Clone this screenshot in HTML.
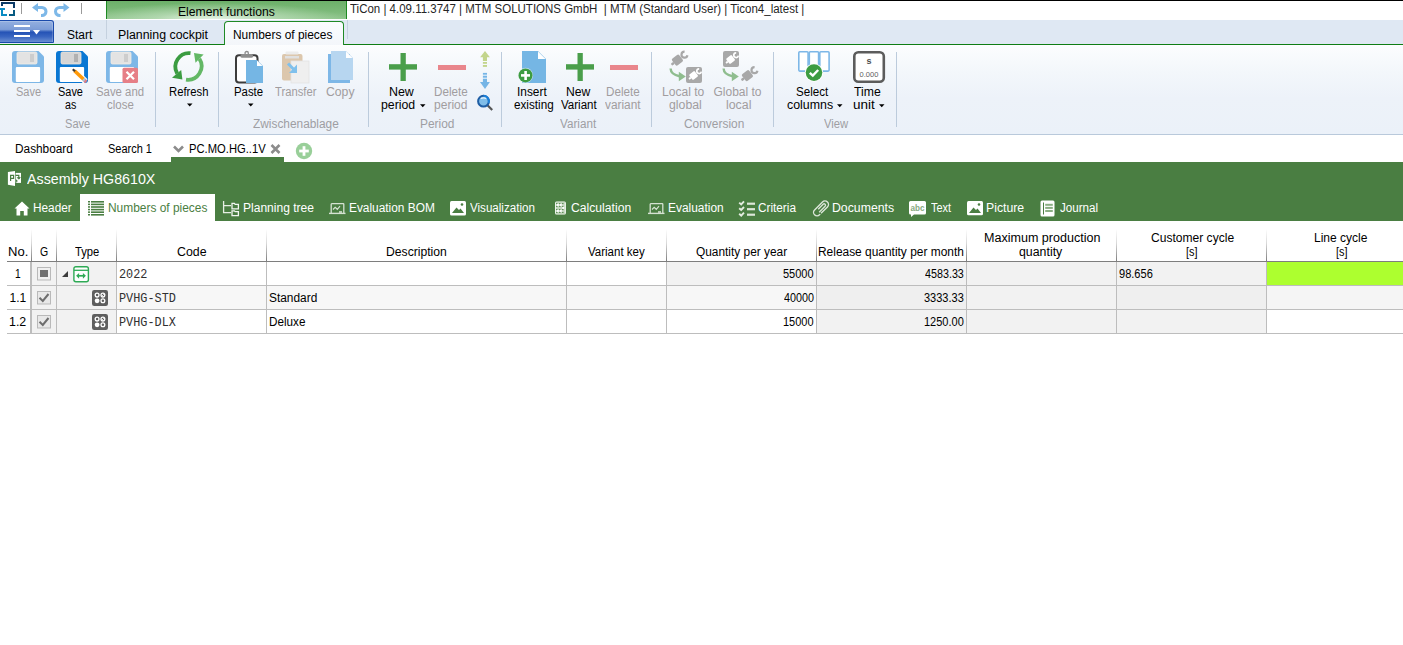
<!DOCTYPE html>
<html><head><meta charset="utf-8"><style>
html,body{margin:0;padding:0;}
body{width:1403px;height:645px;overflow:hidden;background:#fff;position:relative;font-family:'Liberation Sans',sans-serif;}
.a{position:absolute;}
.t{position:absolute;white-space:pre;line-height:20px;transform-origin:0 0;}
svg{position:absolute;overflow:visible;}

</style></head><body>
<!-- top black line -->
<div class="a" style="left:0;top:0;width:1403px;height:1px;background:#000"></div>
<!-- app icon -->
<svg style="left:0;top:0" width="16" height="18" viewBox="0 0 16 18">
<path d="M1 2H15V8H13V4H3V6H1Z" fill="#0b3a66"/>
<path d="M0 8H5V10H3V14H7V16H1V10H0Z" fill="#0a8bc3"/>
<path d="M13 10H15V16H9V14H13Z" fill="#075b82"/>
</svg>
<div class="a" style="left:21px;top:3px;width:1px;height:11px;background:#9a9a9a"></div>
<!-- undo redo -->
<svg style="left:28px;top:0" width="45" height="19" viewBox="0 0 45 19">
<path d="M4 7.5L10 3V6H14A5.5 5.5 0 0 1 14 17H13V14H14A2.5 2.5 0 0 0 14 9H10V12Z" fill="#7db8e8"/>
<path d="M41.5 7.5L35.5 3V6H31.5A5.5 5.5 0 0 0 31.5 17H32.5V14H31.5A2.5 2.5 0 0 1 31.5 9H35.5V12Z" fill="#7db8e8"/>
</svg>
<div class="a" style="left:81px;top:3px;width:1px;height:11px;background:#9a9a9a"></div>
<!-- Element functions contextual header -->
<div class="a" style="left:106px;top:1px;width:239px;height:18px;border-left:1px solid #1d8a22;border-right:1px solid #1d8a22;background:radial-gradient(ellipse 55% 90% at 45% 100%,rgba(235,246,234,0.95) 0%,rgba(200,228,198,0.6) 45%,rgba(200,228,198,0) 100%),linear-gradient(180deg,#6cb069 0%,#7dba7a 60%,#90c68d 100%)"></div>
<!-- tab strip -->
<div class="a" style="left:0;top:19px;width:1403px;height:1px;background:#fff"></div>
<div class="a" style="left:0;top:20px;width:1403px;height:24px;background:#dfe8f3"></div>
<div class="a" style="left:0;top:44px;width:1403px;height:1px;background:#0f7d14"></div>
<!-- app button -->
<div class="a" style="left:0;top:20px;width:53px;height:21px;border:1px solid #1a4aab;border-left:none;border-radius:0 3px 1px 0;box-shadow:inset -1px 1px 0 rgba(255,255,255,0.2);background:linear-gradient(180deg,#93afe0 0%,#7d9dd7 40%,#2553b6 53%,#3a66c1 75%,#6a8fd1 100%)"></div>
<div class="a" style="left:14px;top:25px;width:16px;height:2px;background:#fff"></div>
<div class="a" style="left:14px;top:30px;width:16px;height:2px;background:#fff"></div>
<div class="a" style="left:14px;top:35px;width:16px;height:2px;background:#fff"></div>
<svg style="left:33px;top:30px" width="7" height="5" viewBox="0 0 7 5"><path d="M0 0H7L3.5 4.5Z" fill="#fff"/></svg>
<div class="a" style="left:106px;top:20px;width:1px;height:19px;background:#c5d1df"></div>
<div class="a" style="left:347px;top:20px;width:1px;height:19px;background:#c5d1df"></div>
<!-- active ribbon tab -->
<div class="a" style="left:224px;top:21px;width:118px;height:24px;border:1px solid #1f8a26;border-bottom:none;border-radius:4px 4px 0 0;background:linear-gradient(180deg,#fafcfe,#f3f6fa)"></div>
<!-- ribbon -->
<div class="a" style="left:0;top:45px;width:1403px;height:89px;background:linear-gradient(180deg,#fcfdfe 0%,#f3f7fb 30%,#edf2f9 60%,#ebf1f9 100%)"></div>
<div class="a" style="left:0;top:134px;width:1403px;height:1px;background:#b9c9db"></div>
<div class="a" style="left:155px;top:52px;width:1px;height:75px;background:#bccbdc"></div>
<div class="a" style="left:218px;top:52px;width:1px;height:75px;background:#bccbdc"></div>
<div class="a" style="left:368px;top:52px;width:1px;height:75px;background:#bccbdc"></div>
<div class="a" style="left:501px;top:52px;width:1px;height:75px;background:#bccbdc"></div>
<div class="a" style="left:651px;top:52px;width:1px;height:75px;background:#bccbdc"></div>
<div class="a" style="left:773px;top:52px;width:1px;height:75px;background:#bccbdc"></div>
<div class="a" style="left:896px;top:52px;width:1px;height:75px;background:#bccbdc"></div>
<!--ICONS-->
<!-- doc tabs -->
<div class="a" style="left:171px;top:157px;width:113px;height:5px;background:#4a7e42"></div>
<!-- green band -->
<div class="a" style="left:0;top:162px;width:1403px;height:59px;background:#4a7e42"></div>
<div class="a" style="left:80px;top:194px;width:135px;height:27px;background:#fff"></div>
<!--TABLE-->
<div class="a" style="left:7px;top:262px;width:23px;height:23px;background:#ffffff"></div>
<div class="a" style="left:30px;top:262px;width:26px;height:23px;background:#f2f2f2"></div>
<div class="a" style="left:56px;top:262px;width:60px;height:23px;background:#f2f2f2"></div>
<div class="a" style="left:116px;top:262px;width:150px;height:23px;background:#ffffff"></div>
<div class="a" style="left:266px;top:262px;width:300px;height:23px;background:#ffffff"></div>
<div class="a" style="left:566px;top:262px;width:100px;height:23px;background:#ffffff"></div>
<div class="a" style="left:666px;top:262px;width:150px;height:23px;background:#f2f2f2"></div>
<div class="a" style="left:816px;top:262px;width:150px;height:23px;background:#f2f2f2"></div>
<div class="a" style="left:966px;top:262px;width:150px;height:23px;background:#f2f2f2"></div>
<div class="a" style="left:1116px;top:262px;width:150px;height:23px;background:#f2f2f2"></div>
<div class="a" style="left:1266px;top:262px;width:137px;height:23px;background:#adff2f"></div>
<div class="a" style="left:7px;top:285px;width:1396px;height:1px;background:#bdbdbd"></div>
<div class="a" style="left:7px;top:286px;width:23px;height:23px;background:#ffffff"></div>
<div class="a" style="left:30px;top:286px;width:26px;height:23px;background:#f2f2f2"></div>
<div class="a" style="left:56px;top:286px;width:60px;height:23px;background:#f2f2f2"></div>
<div class="a" style="left:116px;top:286px;width:150px;height:23px;background:#f7f7f7"></div>
<div class="a" style="left:266px;top:286px;width:300px;height:23px;background:#f7f7f7"></div>
<div class="a" style="left:566px;top:286px;width:100px;height:23px;background:#f7f7f7"></div>
<div class="a" style="left:666px;top:286px;width:150px;height:23px;background:#f7f7f7"></div>
<div class="a" style="left:816px;top:286px;width:150px;height:23px;background:#efefef"></div>
<div class="a" style="left:966px;top:286px;width:150px;height:23px;background:#f2f2f2"></div>
<div class="a" style="left:1116px;top:286px;width:150px;height:23px;background:#efefef"></div>
<div class="a" style="left:1266px;top:286px;width:137px;height:23px;background:#f5f5f5"></div>
<div class="a" style="left:7px;top:309px;width:1396px;height:1px;background:#bdbdbd"></div>
<div class="a" style="left:7px;top:310px;width:23px;height:23px;background:#ffffff"></div>
<div class="a" style="left:30px;top:310px;width:26px;height:23px;background:#f2f2f2"></div>
<div class="a" style="left:56px;top:310px;width:60px;height:23px;background:#f2f2f2"></div>
<div class="a" style="left:116px;top:310px;width:150px;height:23px;background:#ffffff"></div>
<div class="a" style="left:266px;top:310px;width:300px;height:23px;background:#ffffff"></div>
<div class="a" style="left:566px;top:310px;width:100px;height:23px;background:#ffffff"></div>
<div class="a" style="left:666px;top:310px;width:150px;height:23px;background:#ffffff"></div>
<div class="a" style="left:816px;top:310px;width:150px;height:23px;background:#f2f2f2"></div>
<div class="a" style="left:966px;top:310px;width:150px;height:23px;background:#f2f2f2"></div>
<div class="a" style="left:1116px;top:310px;width:150px;height:23px;background:#f2f2f2"></div>
<div class="a" style="left:1266px;top:310px;width:137px;height:23px;background:#ffffff"></div>
<div class="a" style="left:7px;top:333px;width:1396px;height:1px;background:#bdbdbd"></div>
<div class="a" style="left:30px;top:262px;width:2px;height:72px;background:#bdbdbd"></div>
<div class="a" style="left:56px;top:262px;width:1px;height:72px;background:#bdbdbd"></div>
<div class="a" style="left:116px;top:262px;width:1px;height:72px;background:#bdbdbd"></div>
<div class="a" style="left:266px;top:262px;width:1px;height:72px;background:#bdbdbd"></div>
<div class="a" style="left:566px;top:262px;width:1px;height:72px;background:#bdbdbd"></div>
<div class="a" style="left:666px;top:262px;width:1px;height:72px;background:#bdbdbd"></div>
<div class="a" style="left:816px;top:262px;width:1px;height:72px;background:#bdbdbd"></div>
<div class="a" style="left:966px;top:262px;width:1px;height:72px;background:#bdbdbd"></div>
<div class="a" style="left:1116px;top:262px;width:1px;height:72px;background:#bdbdbd"></div>
<div class="a" style="left:1266px;top:262px;width:1px;height:72px;background:#bdbdbd"></div>
<div class="a" style="left:31px;top:229px;width:1px;height:32px;background:linear-gradient(180deg,rgba(128,128,128,0) 0%,rgba(128,128,128,0.3) 45%,#7e7e7e 100%)"></div>
<div class="a" style="left:56px;top:229px;width:1px;height:32px;background:linear-gradient(180deg,rgba(128,128,128,0) 0%,rgba(128,128,128,0.3) 45%,#7e7e7e 100%)"></div>
<div class="a" style="left:116px;top:229px;width:1px;height:32px;background:linear-gradient(180deg,rgba(128,128,128,0) 0%,rgba(128,128,128,0.3) 45%,#7e7e7e 100%)"></div>
<div class="a" style="left:266px;top:229px;width:1px;height:32px;background:linear-gradient(180deg,rgba(128,128,128,0) 0%,rgba(128,128,128,0.3) 45%,#7e7e7e 100%)"></div>
<div class="a" style="left:566px;top:229px;width:1px;height:32px;background:linear-gradient(180deg,rgba(128,128,128,0) 0%,rgba(128,128,128,0.3) 45%,#7e7e7e 100%)"></div>
<div class="a" style="left:666px;top:229px;width:1px;height:32px;background:linear-gradient(180deg,rgba(128,128,128,0) 0%,rgba(128,128,128,0.3) 45%,#7e7e7e 100%)"></div>
<div class="a" style="left:816px;top:229px;width:1px;height:32px;background:linear-gradient(180deg,rgba(128,128,128,0) 0%,rgba(128,128,128,0.3) 45%,#7e7e7e 100%)"></div>
<div class="a" style="left:966px;top:229px;width:1px;height:32px;background:linear-gradient(180deg,rgba(128,128,128,0) 0%,rgba(128,128,128,0.3) 45%,#7e7e7e 100%)"></div>
<div class="a" style="left:1116px;top:229px;width:1px;height:32px;background:linear-gradient(180deg,rgba(128,128,128,0) 0%,rgba(128,128,128,0.3) 45%,#7e7e7e 100%)"></div>
<div class="a" style="left:1266px;top:229px;width:1px;height:32px;background:linear-gradient(180deg,rgba(128,128,128,0) 0%,rgba(128,128,128,0.3) 45%,#7e7e7e 100%)"></div>
<div class="a" style="left:7px;top:261px;width:1396px;height:1px;background:#7e7e7e"></div>
<!--/TABLE-->

<!-- Save (disabled) -->
<svg style="left:12px;top:51px" width="32" height="32" viewBox="0 0 32 32">
<path d="M3 0H26.5L32 5.5V29Q32 32 29 32H3Q0 32 0 29V3Q0 0 3 0Z" fill="#7db7e7"/>
<rect x="5" y="1" width="20" height="12" rx="1.5" fill="#e3e3e3" stroke="#f3ede6" stroke-width="0.8"/>
<rect x="18" y="3" width="4" height="8" fill="#cdcdcd"/>
<rect x="3.8" y="16" width="24.3" height="15" rx="1" fill="#fff"/>
</svg>
<!-- Save as -->
<svg style="left:56px;top:51px" width="32" height="32" viewBox="0 0 32 32">
<path d="M3 0H26.5L32 5.5V29Q32 32 29 32H3Q0 32 0 29V3Q0 0 3 0Z" fill="#0a77d3"/>
<rect x="5" y="1" width="20" height="12" rx="1.5" fill="#d5d5d5" stroke="#efe6dc" stroke-width="0.8"/>
<rect x="18" y="3" width="4" height="8" fill="#b1b1b1"/>
<rect x="3.8" y="16" width="24.3" height="15" rx="1" fill="#fff"/>
<path d="M17 18.5L29.5 30.5" stroke="#fff" stroke-width="6"/>
<path d="M18.5 19.8L27.5 28.3" stroke="#ff9a0a" stroke-width="3.6"/>
<path d="M16.8 18.2L19 20.3" stroke="#3a3a3a" stroke-width="2.2"/>
<path d="M27.3 28.1L29.2 29.9" stroke="#b0c4d4" stroke-width="3.6"/>
<path d="M28.7 29.5L30.2 31" stroke="#e07d86" stroke-width="3.2"/>
</svg>
<!-- Save and close (disabled) -->
<svg style="left:106px;top:51px" width="32" height="32" viewBox="0 0 32 32">
<path d="M3 0H26.5L32 5.5V29Q32 32 29 32H3Q0 32 0 29V3Q0 0 3 0Z" fill="#7db7e7"/>
<rect x="5" y="1" width="20" height="12" rx="1.5" fill="#e3e3e3" stroke="#f3ede6" stroke-width="0.8"/>
<rect x="18" y="3" width="4" height="8" fill="#cdcdcd"/>
<rect x="3.8" y="16" width="24.3" height="15" rx="1" fill="#fff"/>
<rect x="16.5" y="16.8" width="15.5" height="15.2" rx="1.5" fill="#e67f87"/>
<path d="M20.5 20.7L28 28.2M28 20.7L20.5 28.2" stroke="#fff" stroke-width="2.2"/>
</svg>
<!-- Refresh -->
<svg style="left:171px;top:51px" width="34" height="32" viewBox="0 0 34 32">
<path d="M19.5 2.2A13.6 13.6 0 0 0 6.2 22.5" fill="none" stroke="#3b9c41" stroke-width="3.8"/>
<path d="M1 26.8L10.2 19L11.4 28.6Z" fill="#3b9c41"/>
<path d="M15 28.6A13.6 13.6 0 0 0 28.4 7.8" fill="none" stroke="#63b865" stroke-width="3.8"/>
<path d="M23 2L32.6 3.6L24.5 11.8Z" fill="#63b865"/>
</svg>
<svg style="left:187px;top:103px" width="6" height="4" viewBox="0 0 6 4"><path d="M0 0.5H5.5L2.75 3.5Z" fill="#000"/></svg>
<!-- Paste -->
<svg style="left:235px;top:51px" width="30" height="32" viewBox="0 0 30 32">
<rect x="1" y="4.2" width="21.5" height="27.3" rx="3" fill="#fff" stroke="#3c3c3c" stroke-width="2"/>
<rect x="5.5" y="3" width="12.5" height="3.8" rx="1.6" fill="#8e8e8e"/>
<circle cx="11.7" cy="2.2" r="1.7" fill="none" stroke="#8e8e8e" stroke-width="1.3"/>
<path d="M11 9H22L28 15V32H11Z" fill="#75b6e4"/>
<path d="M22 9.5V15H27.5Z" fill="#fff"/>
</svg>
<svg style="left:248px;top:103px" width="6" height="4" viewBox="0 0 6 4"><path d="M0 0.5H5.5L2.75 3.5Z" fill="#000"/></svg>
<!-- Transfer (disabled) -->
<svg style="left:281px;top:51px" width="30" height="32" viewBox="0 0 30 32">
<rect x="1" y="3" width="20.5" height="26.5" rx="2" fill="#dcc7ad"/>
<rect x="4.5" y="0.5" width="13" height="3" rx="1" fill="#ececec"/>
<rect x="4" y="5" width="14" height="2.5" fill="#e0e0e0"/>
<rect x="10" y="10" width="18" height="22" fill="#efefef" stroke="#e3e3e3" stroke-width="0.8"/>
<path d="M7 12.5L13.8 19.5" stroke="#7fc0ec" stroke-width="3"/>
<path d="M16 13.5V22H8Z" fill="#7fc0ec"/>
</svg>
<!-- Copy (disabled) -->
<svg style="left:328px;top:51px" width="26" height="32" viewBox="0 0 26 32">
<rect x="0" y="3" width="22" height="29" fill="#7db7e7"/>
<path d="M3 0H18L25 7V29H3Z" fill="#b7d6f0"/>
<path d="M18 0.5V7H24.5Z" fill="#fff"/>
</svg>
<!-- New period plus -->
<svg style="left:389px;top:53px" width="28" height="28" viewBox="0 0 28 28">
<rect x="11.5" y="0" width="5.3" height="28" fill="#4a9e4b"/>
<rect x="0" y="11.2" width="28" height="5.4" fill="#4a9e4b"/>
</svg>
<svg style="left:420px;top:104px" width="6" height="4" viewBox="0 0 6 4"><path d="M0 0.3H5.5L2.75 3.3Z" fill="#000"/></svg>
<!-- Delete period minus -->
<div class="a" style="left:438px;top:65px;width:28px;height:4.5px;background:#e9868c"></div>
<!-- up/down arrows -->
<svg style="left:478px;top:50px" width="14" height="40" viewBox="0 0 14 40">
<path d="M7 1L11.9 7.3H2.1Z" fill="#c3d58c"/>
<rect x="4.9" y="7" width="4.1" height="4" fill="#c3d58c"/>
<rect x="4.9" y="12" width="4.1" height="1.8" fill="#c3d58c"/>
<rect x="4.9" y="15" width="4.1" height="1.9" fill="#c3d58c"/>
<rect x="4.9" y="22.9" width="4.1" height="1.8" fill="#75b5e6"/>
<rect x="4.9" y="25.7" width="4.1" height="2" fill="#75b5e6"/>
<rect x="4.9" y="28.7" width="4.1" height="3.6" fill="#75b5e6"/>
<path d="M2 32.1H11.9L7 38.9Z" fill="#75b5e6"/>
</svg>
<!-- magnifier -->
<svg style="left:476px;top:94px" width="18" height="18" viewBox="0 0 18 18">
<path d="M11.5 11.2L16.2 16" stroke="#555" stroke-width="2.2"/>
<circle cx="7.5" cy="7.2" r="5.4" fill="#7fbde9" stroke="#1e5da4" stroke-width="2"/>
<path d="M7.5 1.8A5.4 5.4 0 0 1 12.6 9" fill="none" stroke="#1b80d9" stroke-width="2"/>
<path d="M4.8 4.6Q7.5 3.2 10.2 4.6" stroke="#e9f4fc" stroke-width="1.1" fill="none"/>
</svg>
<!-- Insert existing -->
<svg style="left:517px;top:51px" width="30" height="33" viewBox="0 0 30 33">
<path d="M5 0H21L29 8V32H5Z" fill="#75b6e4"/>
<path d="M21 0.5V8H28.5Z" fill="#fff"/>
<circle cx="8.5" cy="24.4" r="7.6" fill="#f4f7fb" opacity="0.6"/>
<circle cx="8.5" cy="24.4" r="7" fill="#3d9c41"/>
<rect x="7.3" y="20" width="2.6" height="9" fill="#fff"/>
<rect x="4" y="23.1" width="9" height="2.6" fill="#fff"/>
</svg>
<!-- New variant plus -->
<svg style="left:566px;top:53px" width="28" height="28" viewBox="0 0 28 28">
<rect x="11.5" y="0" width="5.3" height="28" fill="#4a9e4b"/>
<rect x="0" y="11.2" width="28" height="5.4" fill="#4a9e4b"/>
</svg>
<div class="a" style="left:610px;top:65px;width:28px;height:4.5px;background:#e9868c"></div>
<!-- Local to global -->
<svg style="left:669px;top:51px" width="34" height="33" viewBox="0 0 34 33">
<g transform="translate(9.2,8.5) rotate(-38) scale(1.0)">
<rect x="-5.5" y="-4.3" width="9" height="8.6" rx="1.6" fill="#a8a8a8"/>
<rect x="-8.6" y="-1.3" width="3.4" height="2.6" rx="1.2" fill="#a8a8a8"/>
<path d="M9.9 -2.3A3 3 0 1 0 9.9 2.3" fill="none" stroke="#a8a8a8" stroke-width="2.2"/>
</g>
<path d="M1.6 17.5Q1.8 23.5 10.5 25.2" fill="none" stroke="#8fbd8f" stroke-width="2.4"/><path d="M9.8 20.8L16.8 25.5L9.8 30.2Z" fill="#8fbd8f"/>
<rect x="17" y="16" width="16" height="16" rx="2" fill="#a8a8a8"/>
<g transform="translate(25.2,24) rotate(-38) scale(0.78)">
<rect x="-5.5" y="-4.3" width="9" height="8.6" rx="1.6" fill="#fff"/>
<rect x="-8.6" y="-1.3" width="3.4" height="2.6" rx="1.2" fill="#fff"/>
<path d="M9.9 -2.3A3 3 0 1 0 9.9 2.3" fill="none" stroke="#fff" stroke-width="2.2"/>
</g>
</svg>
<!-- Global to local -->
<svg style="left:722px;top:51px" width="34" height="33" viewBox="0 0 34 33">
<rect x="1" y="0" width="16" height="16" rx="2" fill="#a8a8a8"/>
<g transform="translate(9.2,8) rotate(-38) scale(0.78)">
<rect x="-5.5" y="-4.3" width="9" height="8.6" rx="1.6" fill="#fff"/>
<rect x="-8.6" y="-1.3" width="3.4" height="2.6" rx="1.2" fill="#fff"/>
<path d="M9.9 -2.3A3 3 0 1 0 9.9 2.3" fill="none" stroke="#fff" stroke-width="2.2"/>
</g>
<path d="M1.6 17.5Q1.8 23.5 10.5 25.2" fill="none" stroke="#8fbd8f" stroke-width="2.4"/><path d="M9.8 20.8L16.8 25.5L9.8 30.2Z" fill="#8fbd8f"/>
<g transform="translate(26.2,24) rotate(-38) scale(1.0)">
<rect x="-5.5" y="-4.3" width="9" height="8.6" rx="1.6" fill="#a8a8a8"/>
<rect x="-8.6" y="-1.3" width="3.4" height="2.6" rx="1.2" fill="#a8a8a8"/>
<path d="M9.9 -2.3A3 3 0 1 0 9.9 2.3" fill="none" stroke="#a8a8a8" stroke-width="2.2"/>
</g>
</svg>
<!-- Select columns -->
<svg style="left:797px;top:50px" width="35" height="32" viewBox="0 0 35 32">
<rect x="1.8" y="1.8" width="9.3" height="19.3" rx="1" fill="#fff" stroke="#7db7e7" stroke-width="1.6"/>
<rect x="12.3" y="1.8" width="9.3" height="19.3" rx="1" fill="#fff" stroke="#7db7e7" stroke-width="1.6"/>
<rect x="22.8" y="1.8" width="9.3" height="19.3" rx="1" fill="#fff" stroke="#7db7e7" stroke-width="1.6"/>
<circle cx="17" cy="22.6" r="9.2" fill="#fff"/>
<circle cx="17" cy="22.6" r="8.3" fill="#3d9c41"/>
<path d="M12.8 22.8L15.8 25.6L21.2 20" fill="none" stroke="#fff" stroke-width="2.4"/>
</svg>
<svg style="left:837px;top:104px" width="6" height="4" viewBox="0 0 6 4"><path d="M0 0.3H5.5L2.75 3.3Z" fill="#000"/></svg>
<!-- Time unit -->
<svg style="left:853px;top:51px" width="32" height="32" viewBox="0 0 32 32">
<rect x="1.3" y="1.3" width="29.5" height="29.5" rx="4" fill="#fff" stroke="#5c5c5c" stroke-width="2.6"/>
<text x="16" y="13" font-family="Liberation Sans" font-size="9" font-weight="bold" fill="#505050" text-anchor="middle">s</text>
<text x="16" y="26.3" font-family="Liberation Sans" font-size="7.5" fill="#606060" text-anchor="middle">0.000</text>
</svg>
<svg style="left:879px;top:104px" width="6" height="4" viewBox="0 0 6 4"><path d="M0 0.3H5.5L2.75 3.3Z" fill="#000"/></svg>
<!-- doc tab icons -->
<svg style="left:173px;top:145px" width="11" height="8" viewBox="0 0 11 8"><path d="M1 1.5L5.5 6L10 1.5" fill="none" stroke="#8c8c8c" stroke-width="2.6"/></svg>
<svg style="left:270px;top:144px" width="11" height="10" viewBox="0 0 11 10"><path d="M1.5 1L9.5 9M9.5 1L1.5 9" stroke="#8c8c8c" stroke-width="2.6"/></svg>
<svg style="left:295px;top:142px" width="18" height="18" viewBox="0 0 18 18">
<circle cx="9" cy="9" r="8.2" fill="#99cf99"/>
<rect x="7.6" y="4.2" width="2.8" height="9.6" fill="#fff"/>
<rect x="4.2" y="7.6" width="9.6" height="2.8" fill="#fff"/>
</svg>
<!-- green header icon -->
<svg style="left:7px;top:170px" width="16" height="17" viewBox="0 0 16 17">
<rect x="8.6" y="2.9" width="5.4" height="10" fill="#fff"/>
<path d="M0.9 2L8 1V16L0.9 14.8Z" fill="#fff"/>
<path d="M3.6 11V5.4H6.6V8.3H3.6" fill="none" stroke="#4a7e42" stroke-width="1.2"/>
<path d="M8.6 5.3H11.8V8.2" fill="none" stroke="#4a7e42" stroke-width="1.2"/>
<path d="M10.3 7.6L11.8 9.2L13.3 7.6Z" fill="#4a7e42" stroke="#4a7e42" stroke-width="0.8"/>
<path d="M8.6 9.6L10 11L8.6 12.4" fill="none" stroke="#4a7e42" stroke-width="1.2"/>
</svg>
<!-- tab icons -->
<svg style="left:14px;top:201px" width="16" height="15" viewBox="0 0 16 15">
<path d="M8 0.5L15.5 7.5H13.5V14.5H9.8V10H6.2V14.5H2.5V7.5H0.5Z" fill="#fff"/>
</svg>
<svg style="left:88px;top:200px" width="17" height="17" viewBox="0 0 17 17">
<g fill="#4a7e42">
<rect x="0" y="1" width="2" height="1.5"/><rect x="3" y="1" width="13" height="1.6"/>
<rect x="0" y="3.6" width="2" height="1.5"/><rect x="3" y="3.6" width="13" height="1.6"/>
<rect x="0" y="6.2" width="2" height="1.5"/><rect x="3" y="6.2" width="13" height="1.6"/>
<rect x="0" y="8.8" width="2" height="1.5"/><rect x="3" y="8.8" width="13" height="1.6"/>
<rect x="0" y="11.4" width="2" height="1.5"/><rect x="3" y="11.4" width="13" height="1.6"/>
<rect x="0" y="14" width="2" height="1.5"/><rect x="3" y="14" width="13" height="1.6"/>
</g>
</svg>
<svg style="left:222px;top:200px" width="18" height="17" viewBox="0 0 18 17">
<path d="M1.6 1V12.6H9M1.6 5.6H9" fill="none" stroke="#e6eee4" stroke-width="1.3"/>
<path d="M10 3.4H12.4L13.2 4.4H16.4V8.8H10Z" fill="none" stroke="#f2f6f1" stroke-width="1.3"/>
<path d="M10 10.8H12.4L13.2 11.6H16.4V15.6H10Z" fill="none" stroke="#f2f6f1" stroke-width="1.3"/>
</svg>
<svg style="left:329px;top:203px" width="17" height="12" viewBox="0 0 17 12">
<path d="M2.2 10V1.3Q2.2 0.7 2.8 0.7H14.2Q14.8 0.7 14.8 1.3V10" fill="none" stroke="#d5e2d2" stroke-width="1.3"/>
<path d="M0 10.4H16.5" stroke="#d5e2d2" stroke-width="1.4"/>
<rect x="10" y="8.2" width="3" height="1.6" fill="#d5e2d2"/>
<path d="M4 6.5L6.2 4.3L8.3 6.3L11 3.2" fill="none" stroke="#d5e2d2" stroke-width="1.2"/>
</svg>
<svg style="left:450px;top:201px" width="17" height="15" viewBox="0 0 17 15">
<rect x="0" y="0" width="16" height="14.5" rx="1.5" fill="#fff"/>
<path d="M2 12L6.5 6.5L9 9L10.5 7.5L14 12Z" fill="#4a7e42"/>
<circle cx="12" cy="3.5" r="1.3" fill="#4a7e42"/>
</svg>
<svg style="left:554px;top:200px" width="13" height="16" viewBox="0 0 13 16">
<rect x="1.1" y="1.2" width="10.7" height="13.6" rx="1.6" fill="#c3d6be"/>
<path d="M1.6 2.5V13.5M11.3 2.5V13.5" stroke="#f4f8f3" stroke-width="1"/>
<g fill="#4a7e42">
<rect x="2.2" y="3" width="1.2" height="1"/><rect x="5.2" y="3" width="1.2" height="1"/><rect x="8.2" y="3" width="1.2" height="1"/>
<rect x="2.2" y="6" width="1.2" height="1"/><rect x="5.2" y="6" width="1.2" height="1"/><rect x="8.2" y="6" width="1.2" height="1"/>
<rect x="2.2" y="9" width="1.2" height="1"/><rect x="5.2" y="9" width="1.2" height="1"/><rect x="8.2" y="9" width="1.2" height="1"/>
<rect x="2.2" y="12" width="1.2" height="1"/><rect x="5.2" y="12" width="1.2" height="1"/><rect x="8.2" y="12" width="1.2" height="1"/>
</g>
<g fill="#fff"><circle cx="3.9" cy="4.9" r="1.1"/><circle cx="6.8" cy="4.9" r="1.1"/><circle cx="9.3" cy="7.9" r="1.1"/><circle cx="3.9" cy="10.9" r="1.1"/><circle cx="6.8" cy="10.9" r="1.1"/></g>
</svg>
<svg style="left:648px;top:203px" width="17" height="12" viewBox="0 0 17 12">
<path d="M2.2 10V1.3Q2.2 0.7 2.8 0.7H14.2Q14.8 0.7 14.8 1.3V10" fill="none" stroke="#d5e2d2" stroke-width="1.3"/>
<path d="M0 10.4H16.5" stroke="#d5e2d2" stroke-width="1.4"/>
<rect x="10" y="8.2" width="3" height="1.6" fill="#d5e2d2"/>
<path d="M4 6.5L6.2 4.3L8.3 6.3L11 3.2" fill="none" stroke="#d5e2d2" stroke-width="1.2"/>
</svg>
<svg style="left:738px;top:200px" width="18" height="18" viewBox="0 0 18 18">
<path d="M1.2 2.6L3.2 4.4L6 1.4M1.2 8.2L3.2 10L6 7M1.2 13.8L3.2 15.6L6 12.6" fill="none" stroke="#e4ece1" stroke-width="1.9"/>
<rect x="9" y="2.6" width="8" height="2.2" fill="#dde7da"/>
<rect x="9" y="8.1" width="8" height="2.2" fill="#dde7da"/>
<rect x="9" y="13.6" width="8" height="2.2" fill="#dde7da"/>
</svg>
<svg style="left:812px;top:200px" width="18" height="17" viewBox="0 0 18 17">
<g transform="translate(9,8.4) rotate(-45)">
<path d="M-3.5 3.5H5.6A3.5 3.5 0 0 0 5.6 -3.5H-5.6A3.5 3.5 0 0 0 -5.6 3.5H-4.6" fill="none" stroke="#dbe6d8" stroke-width="1.4"/>
<path d="M-4 1.4H4.4A1.4 1.4 0 0 0 4.4 -1.4H-2.5" fill="none" stroke="#dbe6d8" stroke-width="1.3"/>
</g>
</svg>
<svg style="left:909px;top:201px" width="17" height="17" viewBox="0 0 17 17">
<path d="M1.5 0H15.5Q17 0 17 1.5V12Q17 13.5 15.5 13.5H5L2 16V13.5H1.5Q0 13.5 0 12V1.5Q0 0 1.5 0Z" fill="#fff"/>
<text x="8.5" y="10" font-family="Liberation Sans" font-size="8.6" font-weight="bold" fill="#86aa7f" text-anchor="middle" textLength="14" lengthAdjust="spacingAndGlyphs">abc</text>
</svg>
<svg style="left:967px;top:201px" width="17" height="15" viewBox="0 0 17 15">
<rect x="0" y="0" width="16" height="14.2" rx="1.5" fill="#fff"/>
<path d="M2 12L6.5 6.5L9 9L10.5 7.5L14 12Z" fill="#4a7e42"/>
<circle cx="12" cy="3.5" r="1.3" fill="#4a7e42"/>
</svg>
<svg style="left:1040px;top:200px" width="16" height="18" viewBox="0 0 16 18">
<rect x="0.5" y="0.5" width="14" height="16" rx="1.5" fill="#fff"/>
<rect x="3" y="2.5" width="1" height="12" fill="#4a7e42"/>
<g fill="#8aae83"><rect x="5.2" y="3.8" width="7.6" height="2"/><rect x="5.2" y="6.9" width="7.6" height="2"/><rect x="5.2" y="10" width="7.6" height="2"/></g>
</svg>
<!-- table icons -->
<svg style="left:37px;top:267px" width="14" height="14" viewBox="0 0 14 14">
<rect x="0.5" y="0.5" width="13" height="12.5" fill="#f0f0f0" stroke="#b9b9b9" stroke-width="1"/>
<rect x="3" y="3" width="8" height="7" fill="#707070"/>
</svg>
<svg style="left:37px;top:291px" width="14" height="14" viewBox="0 0 14 14">
<rect x="0.5" y="0.5" width="13" height="12.5" fill="#e8e8e8" stroke="#b9b9b9" stroke-width="1"/>
<path d="M2.5 6.8L5.8 10L11.5 3" fill="none" stroke="#6e6e6e" stroke-width="2"/>
</svg>
<svg style="left:37px;top:315px" width="14" height="14" viewBox="0 0 14 14">
<rect x="0.5" y="0.5" width="13" height="12.5" fill="#e8e8e8" stroke="#b9b9b9" stroke-width="1"/>
<path d="M2.5 6.8L5.8 10L11.5 3" fill="none" stroke="#6e6e6e" stroke-width="2"/>
</svg>
<svg style="left:61px;top:270px" width="8" height="8" viewBox="0 0 8 8"><path d="M7 1V7H1Z" fill="#3c3c3c"/></svg>
<svg style="left:72px;top:265px" width="18" height="18" viewBox="0 0 18 18">
<rect x="1.9" y="1.7" width="14.5" height="15" rx="2" fill="#fff" stroke="#2eaa55" stroke-width="1.4"/>
<path d="M1.9 5.3H16.4" stroke="#2eaa55" stroke-width="1.3"/>
<path d="M6 10.8H12" stroke="#2eaa55" stroke-width="1.7"/>
<path d="M4.1 10.8L7.1 7.9V13.7Z M13.9 10.8L10.9 7.9V13.7Z" fill="#2eaa55"/>
</svg>
<svg style="left:92px;top:290px" width="16" height="16" viewBox="0 0 16 16">
<rect x="0" y="0" width="16" height="16" rx="2.2" fill="#5e5e5e"/>
<circle cx="5.1" cy="5.1" r="1.9" fill="none" stroke="#fff" stroke-width="1.3"/><circle cx="10.9" cy="5.1" r="1.9" fill="none" stroke="#fff" stroke-width="1.3"/>
<path d="M10 6L11.8 4.2" stroke="#fff" stroke-width="0.8"/>
<circle cx="5.1" cy="10.8" r="2.4" fill="#fff"/><circle cx="10.9" cy="10.8" r="1.9" fill="none" stroke="#fff" stroke-width="1.3"/>
</svg>
<svg style="left:92px;top:314px" width="16" height="16" viewBox="0 0 16 16">
<rect x="0" y="0" width="16" height="16" rx="2.2" fill="#5e5e5e"/>
<circle cx="5.1" cy="5.1" r="1.9" fill="none" stroke="#fff" stroke-width="1.3"/><circle cx="10.9" cy="5.1" r="1.9" fill="none" stroke="#fff" stroke-width="1.3"/>
<path d="M10 6L11.8 4.2" stroke="#fff" stroke-width="0.8"/>
<circle cx="5.1" cy="10.8" r="2.4" fill="#fff"/><circle cx="10.9" cy="10.8" r="1.9" fill="none" stroke="#fff" stroke-width="1.3"/>
</svg>

<div class="t" style="left:350.00px;top:-1px;font-family:'Liberation Sans', sans-serif;font-size:12px;color:#262626;transform:scaleX(0.9576)">TiCon | 4.09.11.3747 | MTM SOLUTIONS GmbH  | MTM (Standard User) | Ticon4_latest |</div>
<div class="t" style="left:178.39px;top:2px;font-family:'Liberation Sans', sans-serif;font-size:12px;color:#000;transform:scaleX(1.0149)">Element functions</div>
<div class="t" style="left:67.00px;top:25px;font-family:'Liberation Sans', sans-serif;font-size:12px;color:#000;transform:scaleX(1.0000)">Start</div>
<div class="t" style="left:118.47px;top:25px;font-family:'Liberation Sans', sans-serif;font-size:12px;color:#000;transform:scaleX(1.0291)">Planning cockpit</div>
<div class="t" style="left:233.01px;top:25px;font-family:'Liberation Sans', sans-serif;font-size:12px;color:#000;transform:scaleX(0.9939)">Numbers of pieces</div>
<div class="t" style="left:15.58px;top:82px;font-family:'Liberation Sans', sans-serif;font-size:12px;color:#a19d9f;transform:scaleX(0.9192)">Save</div>
<div class="t" style="left:58.39px;top:82px;font-family:'Liberation Sans', sans-serif;font-size:12px;color:#000;transform:scaleX(0.9115)">Save</div>
<div class="t" style="left:65.30px;top:95px;font-family:'Liberation Sans', sans-serif;font-size:12px;color:#000;transform:scaleX(0.8917)">as</div>
<div class="t" style="left:96.25px;top:82px;font-family:'Liberation Sans', sans-serif;font-size:12px;color:#a19d9f;transform:scaleX(0.9490)">Save and</div>
<div class="t" style="left:107.40px;top:95px;font-family:'Liberation Sans', sans-serif;font-size:12px;color:#a19d9f;transform:scaleX(0.9571)">close</div>
<div class="t" style="left:65.08px;top:114px;font-family:'Liberation Sans', sans-serif;font-size:12px;color:#9e9ea3;transform:scaleX(0.9231)">Save</div>
<div class="t" style="left:168.66px;top:82px;font-family:'Liberation Sans', sans-serif;font-size:12px;color:#000;transform:scaleX(0.9400)">Refresh</div>
<div class="t" style="left:234.45px;top:82px;font-family:'Liberation Sans', sans-serif;font-size:12px;color:#000;transform:scaleX(0.9483)">Paste</div>
<div class="t" style="left:274.60px;top:82px;font-family:'Liberation Sans', sans-serif;font-size:12px;color:#a19d9f;transform:scaleX(0.9364)">Transfer</div>
<div class="t" style="left:325.98px;top:82px;font-family:'Liberation Sans', sans-serif;font-size:12px;color:#a19d9f;transform:scaleX(1.0185)">Copy</div>
<div class="t" style="left:252.70px;top:114px;font-family:'Liberation Sans', sans-serif;font-size:12px;color:#9e9ea3;transform:scaleX(0.9895)">Zwischenablage</div>
<div class="t" style="left:388.97px;top:82px;font-family:'Liberation Sans', sans-serif;font-size:12px;color:#000;transform:scaleX(1.0348)">New</div>
<div class="t" style="left:381.38px;top:95px;font-family:'Liberation Sans', sans-serif;font-size:12px;color:#000;transform:scaleX(1.0250)">period</div>
<div class="t" style="left:433.73px;top:82px;font-family:'Liberation Sans', sans-serif;font-size:12px;color:#a19d9f;transform:scaleX(0.9727)">Delete</div>
<div class="t" style="left:433.70px;top:95px;font-family:'Liberation Sans', sans-serif;font-size:12px;color:#a19d9f;transform:scaleX(1.0031)">period</div>
<div class="t" style="left:419.81px;top:114px;font-family:'Liberation Sans', sans-serif;font-size:12px;color:#9e9ea3;transform:scaleX(0.9939)">Period</div>
<div class="t" style="left:517.01px;top:82px;font-family:'Liberation Sans', sans-serif;font-size:12px;color:#000;transform:scaleX(0.9897)">Insert</div>
<div class="t" style="left:513.70px;top:95px;font-family:'Liberation Sans', sans-serif;font-size:12px;color:#000;transform:scaleX(0.9750)">existing</div>
<div class="t" style="left:565.69px;top:82px;font-family:'Liberation Sans', sans-serif;font-size:12px;color:#000;transform:scaleX(1.0130)">New</div>
<div class="t" style="left:561.40px;top:95px;font-family:'Liberation Sans', sans-serif;font-size:12px;color:#000;transform:scaleX(0.9622)">Variant</div>
<div class="t" style="left:605.73px;top:82px;font-family:'Liberation Sans', sans-serif;font-size:12px;color:#a19d9f;transform:scaleX(0.9727)">Delete</div>
<div class="t" style="left:605.30px;top:95px;font-family:'Liberation Sans', sans-serif;font-size:12px;color:#a19d9f;transform:scaleX(0.9889)">variant</div>
<div class="t" style="left:560.00px;top:114px;font-family:'Liberation Sans', sans-serif;font-size:12px;color:#9e9ea3;transform:scaleX(0.9730)">Variant</div>
<div class="t" style="left:661.99px;top:82px;font-family:'Liberation Sans', sans-serif;font-size:12px;color:#a19d9f;transform:scaleX(1.0073)">Local to</div>
<div class="t" style="left:668.70px;top:95px;font-family:'Liberation Sans', sans-serif;font-size:12px;color:#a19d9f;transform:scaleX(1.0258)">global</div>
<div class="t" style="left:713.50px;top:82px;font-family:'Liberation Sans', sans-serif;font-size:12px;color:#a19d9f;transform:scaleX(1.0000)">Global to</div>
<div class="t" style="left:725.57px;top:95px;font-family:'Liberation Sans', sans-serif;font-size:12px;color:#a19d9f;transform:scaleX(1.0304)">local</div>
<div class="t" style="left:683.71px;top:114px;font-family:'Liberation Sans', sans-serif;font-size:12px;color:#9e9ea3;transform:scaleX(0.9932)">Conversion</div>
<div class="t" style="left:796.03px;top:82px;font-family:'Liberation Sans', sans-serif;font-size:12px;color:#000;transform:scaleX(0.9656)">Select</div>
<div class="t" style="left:787.40px;top:95px;font-family:'Liberation Sans', sans-serif;font-size:12px;color:#000;transform:scaleX(1.0318)">columns</div>
<div class="t" style="left:854.40px;top:82px;font-family:'Liberation Sans', sans-serif;font-size:12px;color:#000;transform:scaleX(1.0192)">Time</div>
<div class="t" style="left:853.28px;top:95px;font-family:'Liberation Sans', sans-serif;font-size:12px;color:#000;transform:scaleX(1.1222)">unit</div>
<div class="t" style="left:824.40px;top:114px;font-family:'Liberation Sans', sans-serif;font-size:12px;color:#9e9ea3;transform:scaleX(0.9385)">View</div>
<div class="t" style="left:15.41px;top:139px;font-family:'Liberation Sans', sans-serif;font-size:12px;color:#000;transform:scaleX(0.9860)">Dashboard</div>
<div class="t" style="left:108.39px;top:139px;font-family:'Liberation Sans', sans-serif;font-size:12px;color:#000;transform:scaleX(0.9149)">Search 1</div>
<div class="t" style="left:188.77px;top:139px;font-family:'Liberation Sans', sans-serif;font-size:12px;color:#000;transform:scaleX(0.9346)">PC.MO.HG..1V</div>
<div class="t" style="left:26.70px;top:169px;font-family:'Liberation Sans', sans-serif;font-size:15px;color:#fff;transform:scaleX(0.9504)">Assembly HG8610X</div>
<div class="t" style="left:33.42px;top:198px;font-family:'Liberation Sans', sans-serif;font-size:12px;color:#ffffff;transform:scaleX(0.9842)">Header</div>
<div class="t" style="left:107.51px;top:198px;font-family:'Liberation Sans', sans-serif;font-size:12px;color:#4a7e42;transform:scaleX(0.9939)">Numbers of pieces</div>
<div class="t" style="left:242.70px;top:198px;font-family:'Liberation Sans', sans-serif;font-size:12px;color:#ffffff;transform:scaleX(1.0043)">Planning tree</div>
<div class="t" style="left:348.81px;top:198px;font-family:'Liberation Sans', sans-serif;font-size:12px;color:#ffffff;transform:scaleX(0.9894)">Evaluation BOM</div>
<div class="t" style="left:470.30px;top:198px;font-family:'Liberation Sans', sans-serif;font-size:12px;color:#ffffff;transform:scaleX(0.9657)">Visualization</div>
<div class="t" style="left:571.49px;top:198px;font-family:'Liberation Sans', sans-serif;font-size:12px;color:#ffffff;transform:scaleX(1.0138)">Calculation</div>
<div class="t" style="left:667.71px;top:198px;font-family:'Liberation Sans', sans-serif;font-size:12px;color:#ffffff;transform:scaleX(0.9926)">Evaluation</div>
<div class="t" style="left:758.32px;top:198px;font-family:'Liberation Sans', sans-serif;font-size:12px;color:#ffffff;transform:scaleX(0.9816)">Criteria</div>
<div class="t" style="left:832.38px;top:198px;font-family:'Liberation Sans', sans-serif;font-size:12px;color:#ffffff;transform:scaleX(1.0237)">Documents</div>
<div class="t" style="left:930.50px;top:198px;font-family:'Liberation Sans', sans-serif;font-size:12px;color:#ffffff;transform:scaleX(0.9136)">Text</div>
<div class="t" style="left:986.38px;top:198px;font-family:'Liberation Sans', sans-serif;font-size:12px;color:#ffffff;transform:scaleX(1.0194)">Picture</div>
<div class="t" style="left:1059.70px;top:198px;font-family:'Liberation Sans', sans-serif;font-size:12px;color:#ffffff;transform:scaleX(0.9692)">Journal</div>
<div class="t" style="left:8.31px;top:242px;font-family:'Liberation Sans', sans-serif;font-size:12px;color:#000;transform:scaleX(1.0882)">No.</div>
<div class="t" style="left:40.02px;top:242px;font-family:'Liberation Sans', sans-serif;font-size:12px;color:#000;transform:scaleX(0.8750)">G</div>
<div class="t" style="left:74.90px;top:242px;font-family:'Liberation Sans', sans-serif;font-size:12px;color:#000;transform:scaleX(0.9346)">Type</div>
<div class="t" style="left:177.17px;top:242px;font-family:'Liberation Sans', sans-serif;font-size:12px;color:#000;transform:scaleX(1.0296)">Code</div>
<div class="t" style="left:386.49px;top:242px;font-family:'Liberation Sans', sans-serif;font-size:12px;color:#000;transform:scaleX(1.0138)">Description</div>
<div class="t" style="left:588.10px;top:242px;font-family:'Liberation Sans', sans-serif;font-size:12px;color:#000;transform:scaleX(0.9593)">Variant key</div>
<div class="t" style="left:696.10px;top:242px;font-family:'Liberation Sans', sans-serif;font-size:12px;color:#000;transform:scaleX(0.9902)">Quantity per year</div>
<div class="t" style="left:818.21px;top:242px;font-family:'Liberation Sans', sans-serif;font-size:12px;color:#000;transform:scaleX(0.9938)">Release quantity per month</div>
<div class="t" style="left:983.55px;top:228px;font-family:'Liberation Sans', sans-serif;font-size:12px;color:#000;transform:scaleX(1.0455)">Maximum production</div>
<div class="t" style="left:1019.40px;top:242px;font-family:'Liberation Sans', sans-serif;font-size:12px;color:#000;transform:scaleX(1.0286)">quantity</div>
<div class="t" style="left:1150.70px;top:228px;font-family:'Liberation Sans', sans-serif;font-size:12px;color:#000;transform:scaleX(1.0049)">Customer cycle</div>
<div class="t" style="left:1186.09px;top:242px;font-family:'Liberation Sans', sans-serif;font-size:12px;color:#000;transform:scaleX(0.9091)">[s]</div>
<div class="t" style="left:1314.20px;top:228px;font-family:'Liberation Sans', sans-serif;font-size:12px;color:#000;transform:scaleX(1.0019)">Line cycle</div>
<div class="t" style="left:1335.59px;top:242px;font-family:'Liberation Sans', sans-serif;font-size:12px;color:#000;transform:scaleX(0.9091)">[s]</div>
<div class="t" style="left:14.67px;top:264px;font-family:'Liberation Sans', sans-serif;font-size:12px;color:#000;transform:scaleX(0.8500)">1</div>
<div class="t" style="left:9.50px;top:288px;font-family:'Liberation Sans', sans-serif;font-size:12px;color:#000;transform:scaleX(1.0000)">1.1</div>
<div class="t" style="left:9.47px;top:312px;font-family:'Liberation Sans', sans-serif;font-size:12px;color:#000;transform:scaleX(1.0333)">1.2</div>
<div class="t" style="left:118.91px;top:265px;font-family:'Liberation Mono', monospace;font-size:12px;color:#303030;transform:scaleX(0.9852)">2022</div>
<div class="t" style="left:119.01px;top:289px;font-family:'Liberation Mono', monospace;font-size:12px;color:#303030;transform:scaleX(0.9875)">PVHG-STD</div>
<div class="t" style="left:119.01px;top:313px;font-family:'Liberation Mono', monospace;font-size:12px;color:#303030;transform:scaleX(0.9875)">PVHG-DLX</div>
<div class="t" style="left:268.91px;top:288px;font-family:'Liberation Sans', sans-serif;font-size:12px;color:#000;transform:scaleX(0.9915)">Standard</div>
<div class="t" style="left:268.92px;top:312px;font-family:'Liberation Sans', sans-serif;font-size:12px;color:#000;transform:scaleX(0.9750)">Deluxe</div>
<div class="t" style="left:783.38px;top:264px;font-family:'Liberation Sans', sans-serif;font-size:12px;color:#000;transform:scaleX(0.9156)">55000</div>
<div class="t" style="left:784.00px;top:288px;font-family:'Liberation Sans', sans-serif;font-size:12px;color:#000;transform:scaleX(0.8970)">40000</div>
<div class="t" style="left:783.38px;top:312px;font-family:'Liberation Sans', sans-serif;font-size:12px;color:#000;transform:scaleX(0.9156)">15000</div>
<div class="t" style="left:925.00px;top:264px;font-family:'Liberation Sans', sans-serif;font-size:12px;color:#000;transform:scaleX(0.8953)">4583.33</div>
<div class="t" style="left:924.08px;top:288px;font-family:'Liberation Sans', sans-serif;font-size:12px;color:#000;transform:scaleX(0.9167)">3333.33</div>
<div class="t" style="left:924.08px;top:312px;font-family:'Liberation Sans', sans-serif;font-size:12px;color:#000;transform:scaleX(0.9167)">1250.00</div>
<div class="t" style="left:1119.48px;top:264px;font-family:'Liberation Sans', sans-serif;font-size:12px;color:#000;transform:scaleX(0.9200)">98.656</div>
</body></html>
